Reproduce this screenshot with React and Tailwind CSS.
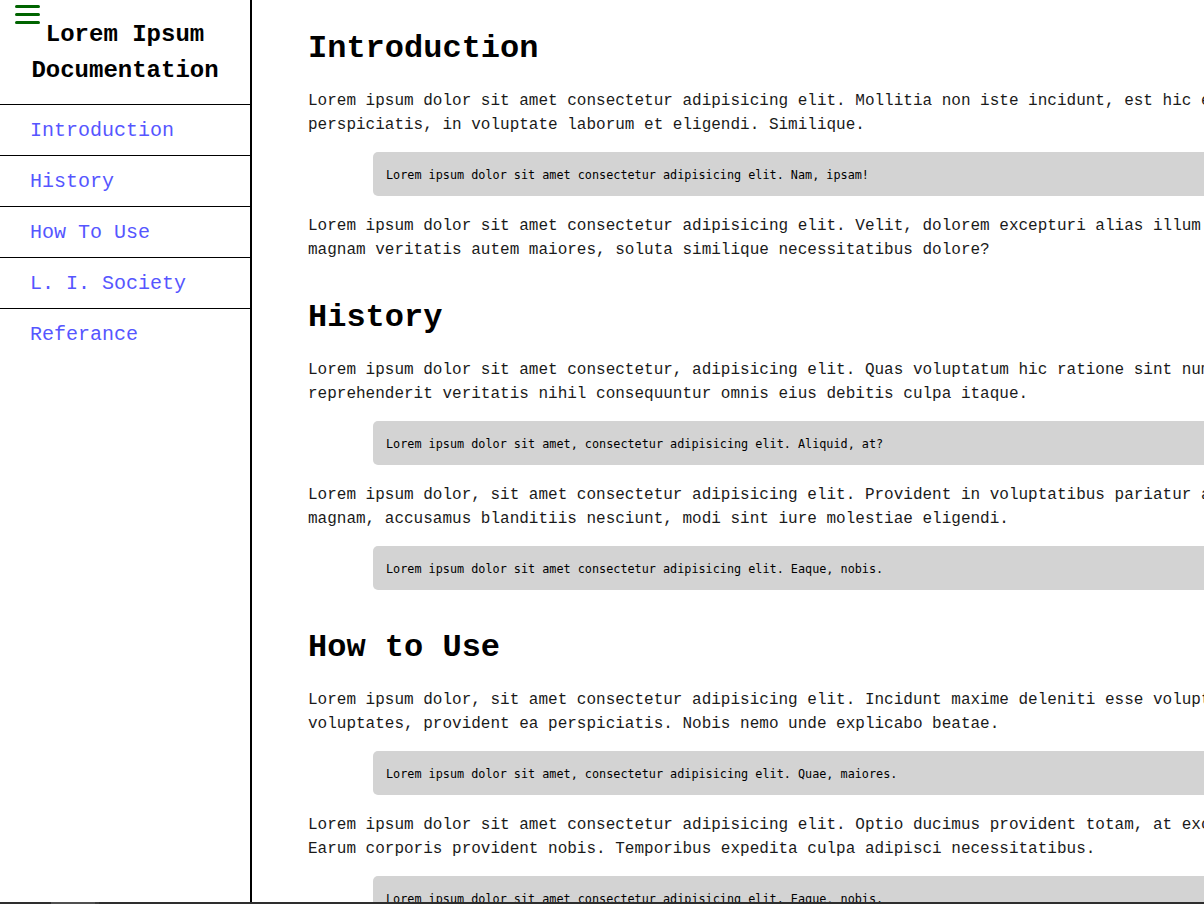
const sections = [
  {
    title: 'Introduction',
    blocks: [
      { type: 'p', lines: ['Lorem ipsum dolor sit amet consectetur adipisicing elit. Mollitia non iste incidunt, est hic excepturi odit quaerat', 'perspiciatis, in voluptate laborum et eligendi. Similique.'] },
      { type: 'code', text: 'Lorem ipsum dolor sit amet consectetur adipisicing elit. Nam, ipsam!' },
      { type: 'p', lines: ['Lorem ipsum dolor sit amet consectetur adipisicing elit. Velit, dolorem excepturi alias illum quos eius', 'magnam veritatis autem maiores, soluta similique necessitatibus dolore?'] },
    ],
  },
  {
    title: 'History',
    blocks: [
      { type: 'p', lines: ['Lorem ipsum dolor sit amet consectetur, adipisicing elit. Quas voluptatum hic ratione sint numquam iusto', 'reprehenderit veritatis nihil consequuntur omnis eius debitis culpa itaque.'] },
      { type: 'code', text: 'Lorem ipsum dolor sit amet, consectetur adipisicing elit. Aliquid, at?' },
      { type: 'p', lines: ['Lorem ipsum dolor, sit amet consectetur adipisicing elit. Provident in voluptatibus pariatur animi', 'magnam, accusamus blanditiis nesciunt, modi sint iure molestiae eligendi.'] },
      { type: 'code', text: 'Lorem ipsum dolor sit amet consectetur adipisicing elit. Eaque, nobis.' },
    ],
  },
  {
    title: 'How to Use',
    blocks: [
      { type: 'p', lines: ['Lorem ipsum dolor, sit amet consectetur adipisicing elit. Incidunt maxime deleniti esse voluptatum', 'voluptates, provident ea perspiciatis. Nobis nemo unde explicabo beatae.'] },
      { type: 'code', text: 'Lorem ipsum dolor sit amet, consectetur adipisicing elit. Quae, maiores.' },
      { type: 'p', lines: ['Lorem ipsum dolor sit amet consectetur adipisicing elit. Optio ducimus provident totam, at excepturi.', 'Earum corporis provident nobis. Temporibus expedita culpa adipisci necessitatibus.'] },
      { type: 'code', text: 'Lorem ipsum dolor sit amet consectetur adipisicing elit. Eaque, nobis.' },
    ],
  },
];

const navItems = ['Introduction', 'History', 'How To Use', 'L. I. Society', 'Referance'];

const mono = "font-['Courier_New','Liberation_Mono',monospace]";

function Section({ title, blocks }) {
  const endsWithCode = blocks[blocks.length - 1].type === 'code';
  return (
    <section className={`flex flex-col ${endsWithCode ? 'mb-[20px]' : 'mb-[21px]'}`}>
      <h2 className="mb-[20px] text-[32px] font-bold leading-[40px] text-black">{title}</h2>
      {blocks.map((b, i) => {
        if (b.type === 'code') {
          return (
            <div
              key={i}
              className="mb-[18px] ml-[65px] flex h-[44px] w-[1100px] shrink-0 items-center rounded-[5px] bg-[#d3d3d3] px-[13px] pt-[3px] font-['DejaVu_Sans_Mono',monospace] text-[11.8px] text-black"
            >
              {b.text}
            </div>
          );
        }
        return (
          <p key={i} className="mb-[15px] whitespace-nowrap text-[16px] leading-6 text-[#1a1a1a]">
            {b.lines[0]}
            <br />
            {b.lines[1]}
          </p>
        );
      })}
    </section>
  );
}

export default function App() {
  return (
    <div className={`flex h-[904px] w-full flex-col overflow-hidden bg-white ${mono}`}>
      <div className="flex h-[902px] min-h-0">
        <aside className="relative w-[252px] shrink-0 border-r-2 border-black">
          <div className="absolute left-[15px] top-[5px] flex w-[25px] flex-col gap-[5px]">
            <span className="h-[3px] rounded-full bg-[#006400]" />
            <span className="h-[3px] rounded-full bg-[#006400]" />
            <span className="h-[3px] rounded-full bg-[#006400]" />
          </div>
          <div className="border-b border-black pb-[15px] pt-[17px] text-center text-[24px] font-bold leading-[36px] text-black">
            Lorem Ipsum
            <br />
            Documentation
          </div>
          <nav className="flex flex-col">
            {navItems.map((item, i) => (
              <a
                key={item}
                href="#"
                className={`flex h-[51px] items-center pl-[30px] pt-[1px] text-[20px] text-[#5656ff] ${i < navItems.length - 1 ? 'border-b border-black' : ''}`}
              >
                {item}
              </a>
            ))}
          </nav>
        </aside>
        <main className="min-w-0 flex-1 overflow-hidden pl-[56px] pt-[29px]">
          {sections.map((s) => (
            <Section key={s.title} {...s} />
          ))}
        </main>
      </div>
      <div className="flex h-[2px] bg-[#2e2e2e]">
        <div className="ml-[51px] w-[44px] bg-[#505050]" />
        <div className="w-[4px] bg-[#3c3c3c]" />
      </div>
    </div>
  );
}
